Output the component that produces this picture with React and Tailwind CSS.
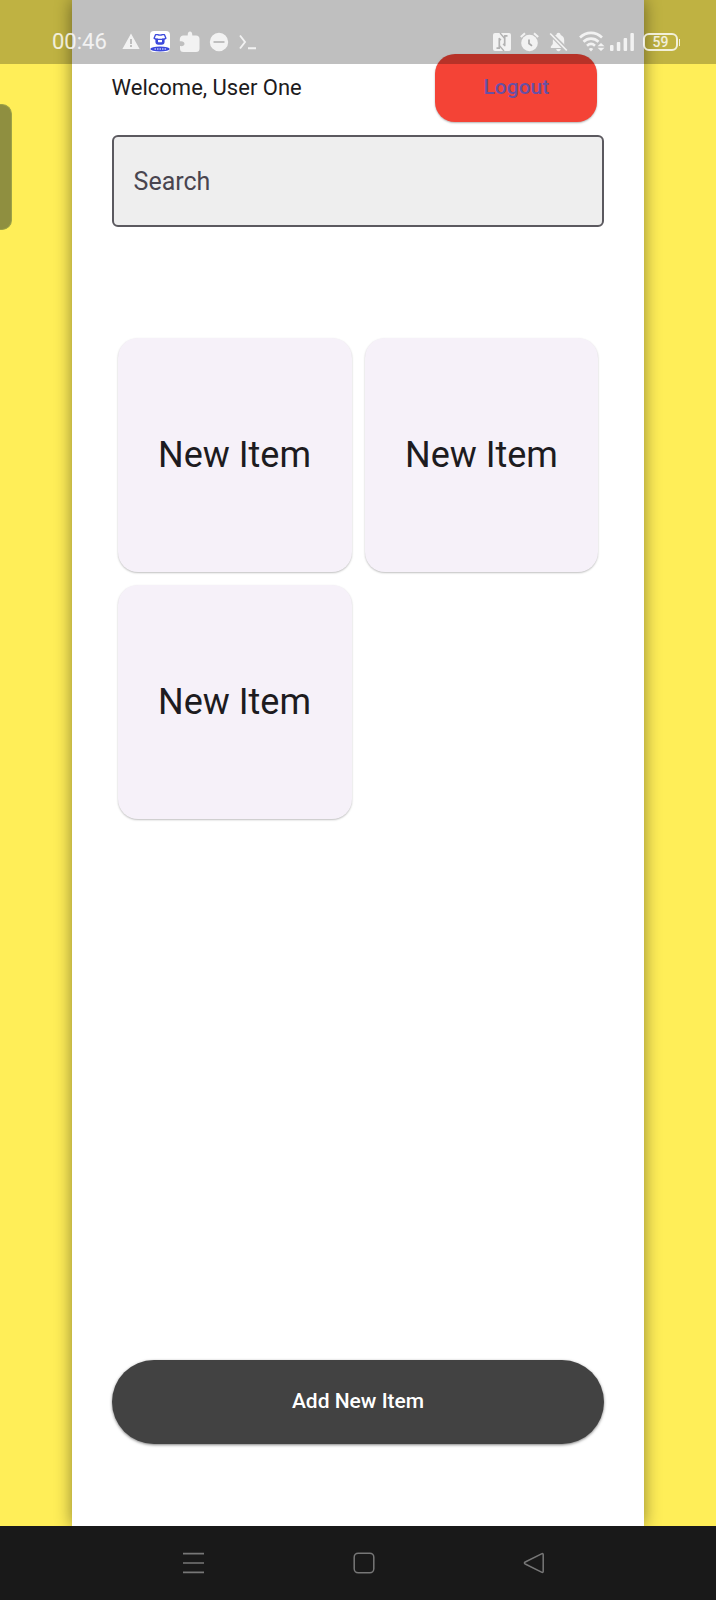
import React from "react";

const items = ["New Item", "New Item", "New Item"];

function StatusBar() {
  return (
    <header className="absolute inset-x-0 top-0 z-10 flex h-16 items-end justify-between bg-black/25 pb-[10px] pl-[52px] pr-9 text-white/80">
      <div className="flex h-6 items-center">
        <span className="w-[55px] whitespace-nowrap text-[22px] leading-6">00:46</span>
        <svg className="ml-[14px] h-5 w-5" viewBox="0 0 20 20" aria-hidden="true">
          <path fill="currentColor" fillRule="evenodd" d="M10 1.600 18.600 17H1.400ZM9 7h2v5H9Zm0 6h2v2H9Z" />
        </svg>
        <svg className="ml-[9px] h-[22px] w-5" viewBox="0 0 20 22" aria-hidden="true">
          <rect width="20" height="21" rx="4" fill="#fff" />
          <path fill="none" stroke="#3c49dc" strokeWidth="1.300" strokeLinejoin="round" d="M5.500 3.700h2q2.500 1 5 0h2l1.400 3.600-2.200 1H6.300l-2.200-1Z" />
          <path fill="none" stroke="#3c49dc" strokeWidth="2.600" d="M6.700 7.500v3.300q0 1.700 1.700 1.700h3.200q1.700 0 1.700-1.700V7.500" />
          <ellipse cx="10" cy="18" rx="9.700" ry="2.600" fill="#3c49dc" />
          <path stroke="#fff" strokeWidth="1.500" strokeDasharray="1.500 1" d="M4.500 18h11.500" opacity=".65" />
        </svg>
        <svg className="ml-[9px] h-[22px] w-[21px]" viewBox="0 0 21 22" aria-hidden="true">
          <path fill="currentColor" d="M4.500 4.500H8.700C8.700 1.800 9.500.500 11 .500s2.300 1.300 2.300 4H17A3.500 3.500 0 0 1 20.500 8v9.500A3.500 3.500 0 0 1 17 21H4.500A3.500 3.500 0 0 1 1 17.500v-2.400c2.700.5 4.500-.5 4.500-2.400S3.700 9.900.800 10.300V8a3.500 3.500 0 0 1 3.700-3.500Z" />
        </svg>
        <svg className="ml-[9px] h-5 w-5" viewBox="0 0 20 20" aria-hidden="true">
          <path fill="currentColor" fillRule="evenodd" d="M10 .800a9.200 9.200 0 1 1 0 18.400A9.200 9.200 0 0 1 10 .800ZM4.500 8.900v2.200h11V8.900Z" />
        </svg>
        <svg className="ml-[10px] h-5 w-[18px]" viewBox="0 0 18 20" fill="none" stroke="currentColor" strokeWidth="1.900" aria-hidden="true">
          <path d="m1 3.500 5 6.500-5 6.500M9 16.300h8" />
        </svg>
      </div>
      <div className="flex h-6 items-center">
        <svg className="h-5 w-[18px]" viewBox="0 0 18 20" aria-hidden="true">
          <rect y="1" width="18" height="18" rx="2" fill="currentColor" />
          <path fill="none" stroke="#b2b2b2" strokeWidth="1.700" strokeLinejoin="round" d="M3.500 16.200h2.800V6.500l1.500 1.800M14.500 3.800h-2.800v9.700l-1.500-1.800" />
          <path fill="none" stroke="#b2b2b2" strokeWidth="1.300" d="M7 1 11.700 6.500M6.300 13.500 11 19" />
        </svg>
        <svg className="ml-[9px] h-5 w-[19px]" viewBox="0 0 19 20" aria-hidden="true">
          <circle cx="9.500" cy="11" r="8.300" fill="currentColor" />
          <path fill="none" stroke="currentColor" strokeWidth="2" d="M.800 5 5 1.300M18.200 5 14 1.300" />
          <path fill="none" stroke="#a9a9a9" strokeWidth="1.700" d="M9 7.500v4l3 2.300" />
        </svg>
        <svg className="ml-[10px] h-5 w-[19px]" viewBox="0 0 19 20" aria-hidden="true">
          <path fill="currentColor" d="M7.300 3C7.600 1.500 8.400.800 9.500.800s1.900.7 2.200 2.200c2.400 1 3.500 2.800 3.500 5.200V12l1 1.300L6 3.300ZM3.900 7.300 12.400 16H1.800v-1.500l2-2.500ZM7.300 17h4.400c0 1.300-.9 2.200-2.200 2.200S7.300 18.300 7.300 17Z" />
          <path stroke="currentColor" strokeWidth="1.700" d="m1.200 1.500 16.600 17" />
        </svg>
        <svg className="ml-[11px] h-[22px] w-[26px]" viewBox="0 0 26 22" aria-hidden="true">
          <g fill="none" stroke="currentColor" strokeWidth="2.600">
            <path d="M1 6.500C7.400.300 16.600.300 23 6.500" />
            <path d="M4.500 10.700c4.300-4.100 10.700-4.100 15 0" />
            <path d="M8 14.800c2.400-2.200 5.600-2.200 8 0" />
          </g>
          <path fill="currentColor" d="m12 20.500-2.200-2.500c1.300-1.200 3.100-1.200 4.400 0ZM18.500 15.200l3.500-3.200 3.500 3.200ZM18.500 16.800l3.500 3.200 3.500-3.200Z" />
        </svg>
        <svg className="ml-[5px] h-5 w-6" viewBox="0 0 24 20" aria-hidden="true">
          <g fill="currentColor">
            <rect y="13" width="3.500" height="6" rx="1" />
            <rect x="6.800" y="10" width="3.500" height="9" rx="1" />
            <rect x="13.600" y="6" width="3.500" height="13" rx="1" />
            <rect x="20.400" y="1" width="3.500" height="18" rx="1" />
          </g>
        </svg>
        <div className="ml-[9px] flex items-center gap-px">
          <span className="flex h-[18px] w-[35px] items-center justify-center rounded-md border-2 border-current text-sm font-medium leading-none">59</span>
          <span className="h-[7px] w-px bg-current" />
        </div>
      </div>
    </header>
  );
}

function NavigationBar() {
  const button = "flex h-12 w-12 items-center justify-center";
  return (
    <nav className="flex h-[74px] items-center justify-center gap-[122px] bg-[#191919] pl-3 text-[#777777]" aria-label="System navigation">
      <button className={button} aria-label="Recent apps">
        <svg className="h-6 w-6" viewBox="0 0 24 24" fill="none" stroke="currentColor" strokeWidth="1.700">
          <path d="M1 2.700h21M1 12h21M1 21.300h21" />
        </svg>
      </button>
      <button className={button} aria-label="Home">
        <svg className="h-6 w-6" viewBox="0 0 24 24" fill="none" stroke="currentColor" strokeWidth="1.500">
          <rect x="2.200" y="2.200" width="19.600" height="19.600" rx="4" />
        </svg>
      </button>
      <button className={button} aria-label="Back">
        <svg className="h-6 w-6" viewBox="0 0 24 24" fill="none" stroke="currentColor" strokeWidth="1.500" strokeLinejoin="round">
          <path d="M20 2.700 3.200 11q-1.600 1 0 2L20 21.300q1.200.4 1.200-1V3.700q0-1.400-1.200-1Z" />
        </svg>
      </button>
    </nav>
  );
}

export default function App() {
  return (
    <div className="relative flex min-h-screen flex-col bg-[#ffee58] font-[Roboto,sans-serif] text-[#1d1b20]">
      <StatusBar />
      <div className="absolute left-0 top-[104px] h-[126px] w-3 rounded-r-[10px] border-y border-r border-[#9da246] bg-[#8f8f40]" />
      <div className="flex flex-1 flex-col overflow-hidden">
        <main className="mx-[10%] flex flex-1 flex-col bg-white px-10 pb-[82px] pt-[54px] shadow-[0_0_16px_rgba(0,0,0,0.45)]">
          <div className="flex items-center justify-between pr-[7px]">
            <h1 className="text-[22px] leading-7">Welcome, User One</h1>
            <button className="h-[68px] w-[162px] rounded-[20px] bg-[#f44336] text-[21px] font-medium text-[#6750a4] shadow-[0_1px_2px_rgba(0,0,0,0.3)]">
              Logout
            </button>
          </div>
          <input
            type="search"
            aria-label="Search"
            placeholder="Search"
            className="mt-[13px] h-[92px] w-full rounded-md border-2 border-[#5b595f] bg-[#eeeeee] px-5 text-[25px] placeholder:text-[#49454f]"
          />
          <ul className="mt-[111px] grid grid-cols-2 gap-[13px] px-[6px]">
            {items.map((item, index) => (
              <li key={index} className="flex aspect-square items-center justify-center rounded-[20px] bg-[#f6f1f9] text-[36px] shadow-[0_1px_2px_rgba(0,0,0,0.25)]">
                {item}
              </li>
            ))}
          </ul>
          <button className="mt-auto h-[84px] rounded-full bg-[#424242] text-[21px] font-medium text-white shadow-[0_1px_3px_rgba(0,0,0,0.5)]">
            Add New Item
          </button>
        </main>
      </div>
      <NavigationBar />
    </div>
  );
}
